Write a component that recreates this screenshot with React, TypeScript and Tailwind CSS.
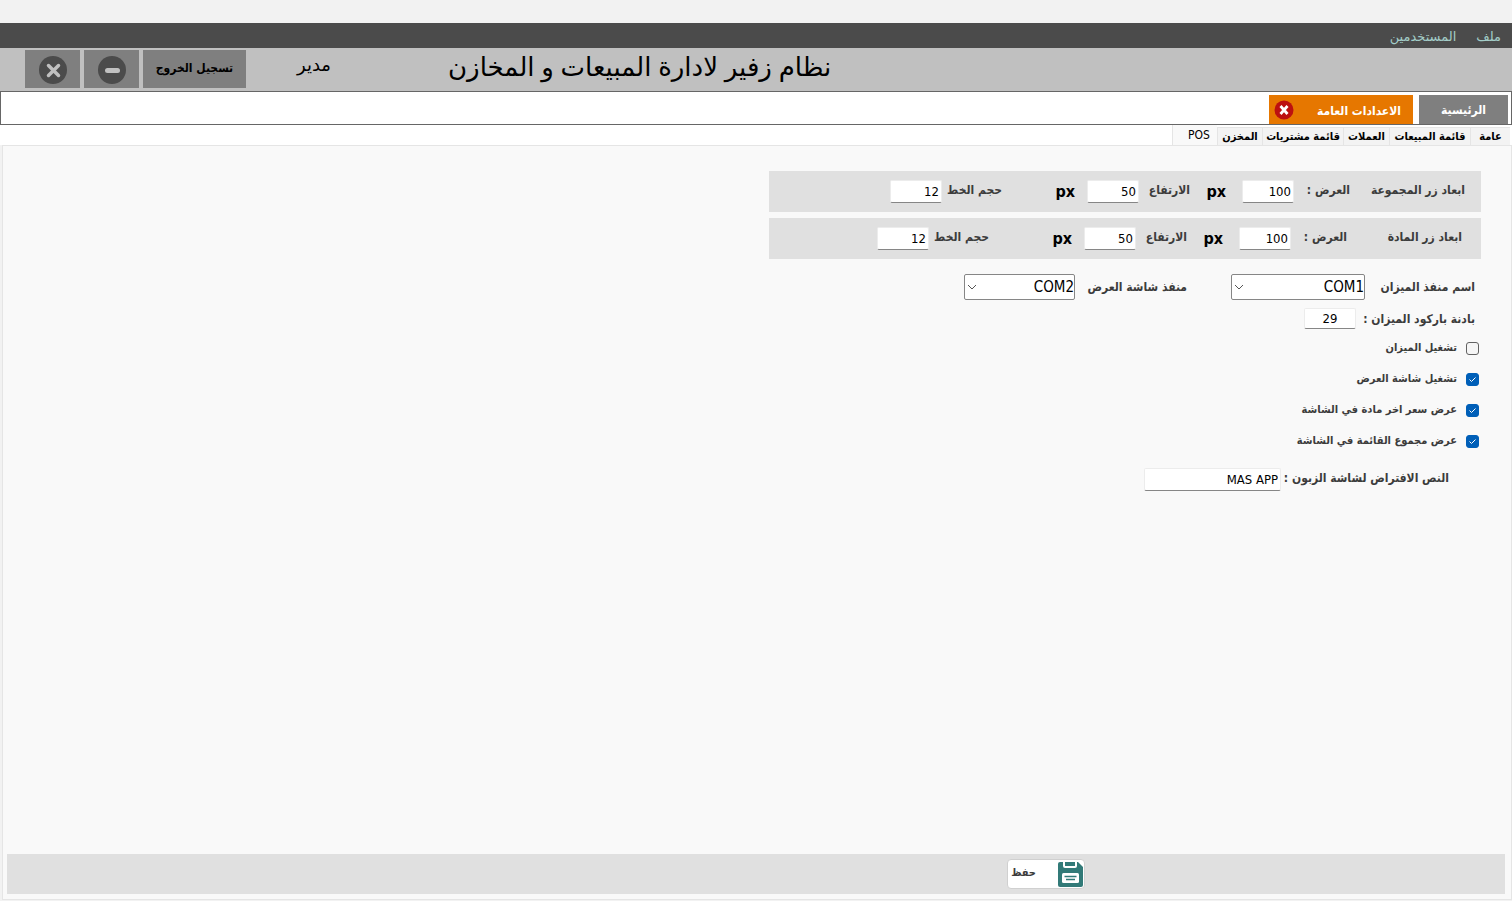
import { useState } from "react";
import type { ReactNode } from "react";

const subTabs = [
  { name: "عامة", width: "w-10" },
  { name: "قائمة المبيعات", width: "w-[81px]" },
  { name: "العملات", width: "w-[46px]" },
  { name: "قائمة مشتريات", width: "w-[81px]" },
  { name: "المخزن", width: "w-[45px]" },
  { name: "POS", width: "w-[45px]" },
];

const fieldBox =
  "border border-[#ececec] border-b-[#868686] rounded-xs bg-white text-[13px] font-normal text-black outline-none";

function NumberField({ id, value }: { id: string; value: string }) {
  return <input id={id} type="text" defaultValue={value} className={`h-[23px] w-[52px] px-0.5 ${fieldBox}`} />;
}

function Unit() {
  return <span className="w-5 text-base leading-5 font-bold text-black">px</span>;
}

type SizeRowProps = { id: string; title: string; start: string; fontGap: string };

function SizeRow({ id, title, start, fontGap }: SizeRowProps) {
  return (
    <div className={`flex h-[41px] w-[712px] items-center bg-[#e0e0e0] whitespace-nowrap ${start}`}>
      <span className="w-[115px] pb-1">{title}</span>
      <label htmlFor={`${id}-width`} className="w-14 pb-1">العرض :</label>
      <NumberField id={`${id}-width`} value="100" />
      <div className="flex w-[52px] ps-4"><Unit /></div>
      <label htmlFor={`${id}-height`} className="w-[51px] pb-1">الارتفاع</label>
      <NumberField id={`${id}-height`} value="50" />
      <div className={`flex ps-3 ${fontGap}`}><Unit /></div>
      <label htmlFor={`${id}-font`} className="w-[60px] pb-1">حجم الخط</label>
      <NumberField id={`${id}-font`} value="12" />
    </div>
  );
}

function PortSelect({ id, value, width }: { id: string; value: string; width: string }) {
  return (
    <div className={`relative ${width}`}>
      <select
        id={id}
        defaultValue={value}
        className="h-[26px] w-full appearance-none rounded-xs border border-[#868686] bg-white pe-5 pt-0.5 text-[15px] text-black"
      >
        <option>COM1</option>
        <option>COM2</option>
      </select>
      <svg viewBox="0 0 10 6" className="pointer-events-none absolute top-[10px] left-[3px] h-1.5 w-2.5" fill="none" stroke="#555" strokeWidth="1">
        <path d="M1 1l4 4 4-4" />
      </svg>
    </div>
  );
}

function CheckRow({ label, initial }: { label: string; initial: boolean }) {
  const [checked, setChecked] = useState(initial);
  return (
    <label className="flex h-[31px] items-center gap-[9px] text-[11px]">
      <span className="relative flex">
        <input
          type="checkbox"
          checked={checked}
          onChange={() => setChecked(!checked)}
          className="size-[13px] appearance-none rounded-[3px] border border-[#626262] bg-[#f6f6f6] checked:border-[#005fb8] checked:bg-[#005fb8]"
        />
        {checked && (
          <svg viewBox="0 0 13 13" className="pointer-events-none absolute inset-0 size-[13px]" fill="none" stroke="#fff" strokeWidth="1">
            <path d="M3.5 6.5l2 2 4-4" />
          </svg>
        )}
      </span>
      <span>{label}</span>
    </label>
  );
}

function WindowButton({ label, children }: { label: string; children: ReactNode }) {
  return (
    <button aria-label={label} className="flex h-[38px] w-[55px] items-center justify-center bg-[#7f7f7f] pt-0.5">
      <svg viewBox="0 0 28 28" className="size-7">
        <circle cx="14" cy="14" r="14" fill="#4b4b4b" />
        {children}
      </svg>
    </button>
  );
}

export default function App() {
  const [tab, setTab] = useState("POS");
  return (
    <div dir="rtl" className="flex min-h-screen flex-col bg-[#f2f2f2] pt-[23px] font-['DejaVu_Sans_Condensed','DejaVu_Sans',sans-serif] text-xs text-[#3c3c3c]">
      <nav className="flex h-[25px] items-center gap-5 bg-[#4b4b4b] px-[11px] pt-0.5 font-['Noto_Sans','DejaVu_Sans',sans-serif] text-[13px] text-[#a3cdc8]">
        <button>ملف</button>
        <button>المستخدمين</button>
      </nav>

      <header className="flex h-[43px] items-start justify-end bg-[#c0c0c0] pt-0.5 pe-[25px] whitespace-nowrap text-black">
        <h1 className="font-['Noto_Sans','DejaVu_Sans',sans-serif] text-[26px] leading-8">نظام زفير لادارة المبيعات و المخازن</h1>
        <span className="ms-[117px] w-[85px] font-['Noto_Sans','DejaVu_Sans',sans-serif] text-lg leading-7">مدير</span>
        <div className="flex gap-1">
          <button className="h-[38px] w-[103px] bg-[#7f7f7f] pb-0.5 text-xs font-bold">تسجيل الخروج</button>
          <WindowButton label="تصغير">
            <rect x="7" y="12" width="15" height="5" rx="2.5" fill="#c0c0c0" />
          </WindowButton>
          <WindowButton label="إغلاق">
            <path d="M9.5 9.5l10 10m0-10l-10 10" stroke="#c0c0c0" strokeWidth="3.5" strokeLinecap="round" />
          </WindowButton>
        </div>
      </header>

      <div className="flex h-[34px] gap-1.5 border border-[#666] bg-white px-[3px] pt-[3px] text-xs font-bold text-white">
        <button className="h-[29px] w-[89px] bg-[#7f7f7f]">الرئيسية</button>
        <div className="flex h-[29px] w-36 items-center justify-between bg-[#e67700] ps-3 pe-[5px]">
          <button className="pt-0.5 whitespace-nowrap">الاعدادات العامة</button>
          <button aria-label="إغلاق التبويب">
            <svg viewBox="0 0 20 20" className="size-5">
              <circle cx="10" cy="10" r="9.5" fill="#bc1010" />
              <path d="M6.5 6l7 8m0-8l-7 8" stroke="#fff" strokeWidth="2.8" />
            </svg>
          </button>
        </div>
      </div>

      <div role="tablist" className="flex h-5 items-end bg-white px-0.5">
        {subTabs.map(({ name, width }) => (
          <button
            key={name}
            role="tab"
            aria-selected={tab === name}
            onClick={() => setTab(name)}
            className={`${width} flex justify-center border-l border-[#e5e5e5] whitespace-nowrap text-black ${
              tab === name ? "h-5 bg-[#f9f9f9]" : "h-[18px] border-t bg-[#f3f3f3]"
            } ${name === "POS" ? "pe-2 pt-0.5 text-xs leading-4" : "text-[11px] leading-[18px] font-bold"}`}
          >
            {name}
          </button>
        ))}
      </div>

      <main className="mb-px ml-0.5 flex grow flex-col border border-[#e5e5e5] bg-[#f9f9f9] pt-[25px] font-bold">
        <div className="flex flex-col gap-1.5 ps-[30px]">
          <SizeRow id="group" title="ابعاد زر المجموعة" start="ps-4" fontGap="w-[85px]" />
          <SizeRow id="item" title="ابعاد زر المادة" start="ps-[19px]" fontGap="w-[95px]" />
        </div>

        <div className="mt-[15px] flex items-center ps-9 font-normal whitespace-nowrap">
          <label htmlFor="scale-port" className="w-[110px] font-bold">اسم منفذ الميزان</label>
          <PortSelect id="scale-port" value="COM1" width="w-[134px]" />
          <label htmlFor="display-port" className="ms-11 w-28 font-bold">منفذ شاشة العرض</label>
          <PortSelect id="display-port" value="COM2" width="w-[111px]" />
        </div>

        <div className="mt-2 flex items-center ps-9 whitespace-nowrap">
          <label htmlFor="prefix" className="w-[119px]">بادنة باركود الميزان :</label>
          <input id="prefix" type="text" defaultValue="29" className={`h-[21px] w-[52px] text-center ${fieldBox}`} />
        </div>

        <div className="mt-1 flex flex-col items-start ps-8">
          <CheckRow label="تشغيل الميزان" initial={false} />
          <CheckRow label="تشغيل شاشة العرض" initial />
          <CheckRow label="عرض سعر اخر مادة في الشاشة" initial />
          <CheckRow label="عرض مجموع القائمة في الشاشة" initial />
        </div>

        <div className="mt-[11px] flex items-center ps-[62px] whitespace-nowrap">
          <label htmlFor="customer-text" className="w-[168px] pb-1">النص الافتراض لشاشة الزبون :</label>
          <input id="customer-text" type="text" defaultValue="MAS APP" className={`h-[23px] w-[137px] px-0.5 ${fieldBox}`} />
        </div>

        <footer className="ms-1.5 me-1 mt-auto mb-[5px] flex h-10 items-center bg-[#e0e0e0] ps-[420px]">
          <button className="flex h-[30px] w-[78px] items-center gap-[22px] rounded border border-[#d0d0d0] bg-white ps-px text-[11px] font-bold">
            <svg viewBox="0 0 25 25" className="size-[25px] shrink-0">
              <path d="M2 0h18l5 5v18a2 2 0 0 1-2 2H2a2 2 0 0 1-2-2V2a2 2 0 0 1 2-2z" fill="#327a78" />
              <path d="M5 0v4a2 2 0 0 0 2 2h10a2 2 0 0 0 2-2V0z" fill="#fff" />
              <path d="M7 0h10v4H7z" fill="#327a78" />
              <rect x="4" y="11" width="17" height="10" rx="1.5" fill="#fff" />
              <path d="M6.5 14.5h12M8 17.5h9" stroke="#327a78" strokeWidth="1.5" />
            </svg>
            <span className="pb-0.5">حفظ</span>
          </button>
        </footer>
      </main>
    </div>
  );
}
